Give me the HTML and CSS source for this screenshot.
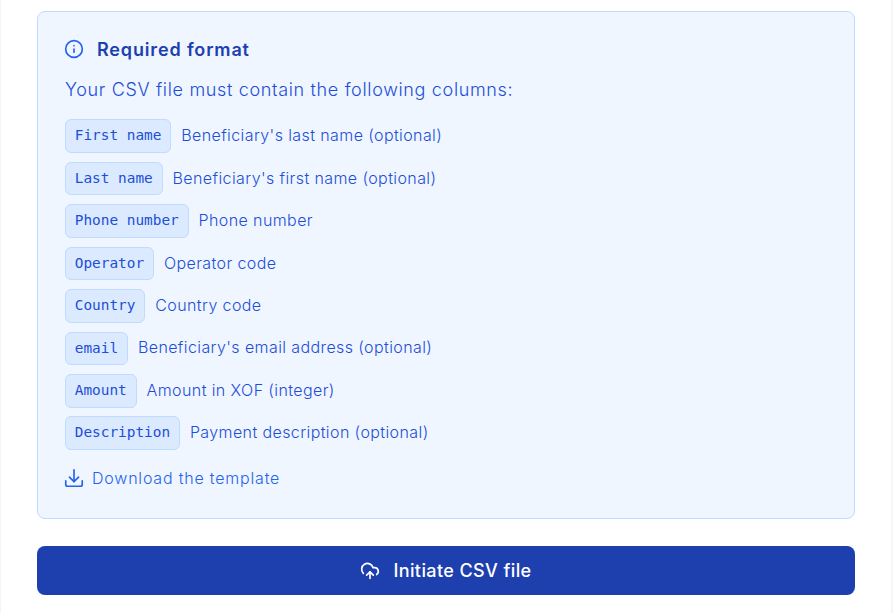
FILE: index.html
```html
<!DOCTYPE html>
<html>

<head>
	<meta name="viewport" content="width=device-width, initial-scale=1.0">
	<meta charset="UTF-8">
	<title>Required format</title>
	<link rel="stylesheet" href="styles.css">
</head>

<body>
	<div class="panel">
		<div class="format-box">
			<div class="format-title">
				<svg class="icon-info" viewBox="0 0 24 24" fill="none" stroke="currentColor" stroke-width="2" stroke-linecap="round" stroke-linejoin="round">
					<circle cx="12" cy="12" r="10"></circle>
					<path d="M12 16v-4"></path>
					<path d="M12 8h.01"></path>
				</svg>
				<h3>Required format</h3>
			</div>
			<p class="format-intro">Your CSV file must contain the following columns:</p>
			<ul class="column-list">
				<li><code>First name</code><span>Beneficiary's last name (optional)</span></li>
				<li><code>Last name</code><span>Beneficiary's first name (optional)</span></li>
				<li><code>Phone number</code><span>Phone number</span></li>
				<li><code>Operator</code><span>Operator code</span></li>
				<li><code>Country</code><span>Country code</span></li>
				<li><code>email</code><span>Beneficiary's email address (optional)</span></li>
				<li><code>Amount</code><span>Amount in XOF (integer)</span></li>
				<li><code>Description</code><span>Payment description (optional)</span></li>
			</ul>
			<a class="template-link" href="#">
				<svg class="icon-download" viewBox="0 0 24 24" fill="none" stroke="currentColor" stroke-width="1.8" stroke-linecap="round" stroke-linejoin="round">
					<path d="M12 3v13"></path>
					<path d="M7 11l5 5 5-5"></path>
					<path d="M3 15v4a2 2 0 0 0 2 2h14a2 2 0 0 0 2-2v-4"></path>
				</svg>
				Download the template
			</a>
		</div>
		<button class="submit-btn" type="button">
			<svg class="icon-upload" viewBox="0 0 24 24" fill="none" stroke="currentColor" stroke-width="2" stroke-linecap="round" stroke-linejoin="round">
				<path d="M12 13v8"></path>
				<path d="M4 14.9A7 7 0 1 1 15.7 8h1.8a4.5 4.5 0 0 1 2.5 8.2"></path>
				<path d="M8 17l4-4 4 4"></path>
			</svg>
			Initiate CSV file
		</button>
	</div>
</body>

</html>
```

FILE: styles.css
```css
html,
body {
	margin: 0;
	height: 100%;
	overflow: hidden;
}

body {
	background: #f6f6f9;
	font-family: "Inter", "Liberation Sans", sans-serif;
}

.panel {
	box-sizing: border-box;
	width: 890px;
	height: 613px;
	margin-left: 1px;
	padding: 11px 36px 0;
	background: #fff;
}

.format-box {
	box-sizing: border-box;
	height: 508px;
	padding: 23px 27px 0;
	background: #eff6ff;
	border: 1px solid #bfdbfe;
	border-radius: 8px;
	color: #1d4ed8;
}

.format-title {
	display: flex;
	align-items: center;
	gap: 13px;
	height: 28px;
}

.format-title h3 {
	margin: 0;
	font-size: 18px;
	font-weight: 600;
	letter-spacing: 0.85px;
	color: #1e40af;
}

.icon-info {
	width: 20px;
	height: 20px;
	margin-left: -1px;
	color: #2563eb;
}

.format-intro {
	margin: 13px 0 0;
	font-size: 18px;
	font-weight: 350;
	line-height: 28px;
	letter-spacing: 0.66px;
}

.column-list {
	list-style: none;
	margin: 15.4px 0 0;
	padding: 0;
}

.column-list li {
	display: flex;
	align-items: center;
	gap: 10px;
	height: 33.6px;
	margin-bottom: 8.85px;
	font-size: 16px;
	font-weight: 350;
	letter-spacing: 0.4px;
}

.column-list span {
	margin-top: -2px;
}

.column-list code {
	padding: 7px 8.8px;
	background: #dbeafe;
	border: 1px solid #bfdbfe;
	border-radius: 6px;
	font-family: "DejaVu Sans Mono", monospace;
	font-size: 14.4px;
	line-height: 17.6px;
	letter-spacing: 0;
}

.template-link {
	display: flex;
	align-items: center;
	gap: 7px;
	margin-top: 17px;
	font-size: 16px;
	font-weight: 350;
	letter-spacing: 0.8px;
	color: #2563eb;
	text-decoration: none;
}

.icon-download {
	width: 22px;
	height: 22px;
	margin-left: -2px;
}

.submit-btn {
	display: flex;
	align-items: center;
	justify-content: center;
	gap: 13px;
	width: 100%;
	height: 49px;
	margin-top: 27px;
	background: #1e40af;
	border: 0;
	border-radius: 8px;
	color: #fff;
	font-family: inherit;
	font-size: 18px;
	font-weight: 500;
	letter-spacing: 0.4px;
}

.icon-upload {
	width: 20px;
	height: 20px;
}
```
